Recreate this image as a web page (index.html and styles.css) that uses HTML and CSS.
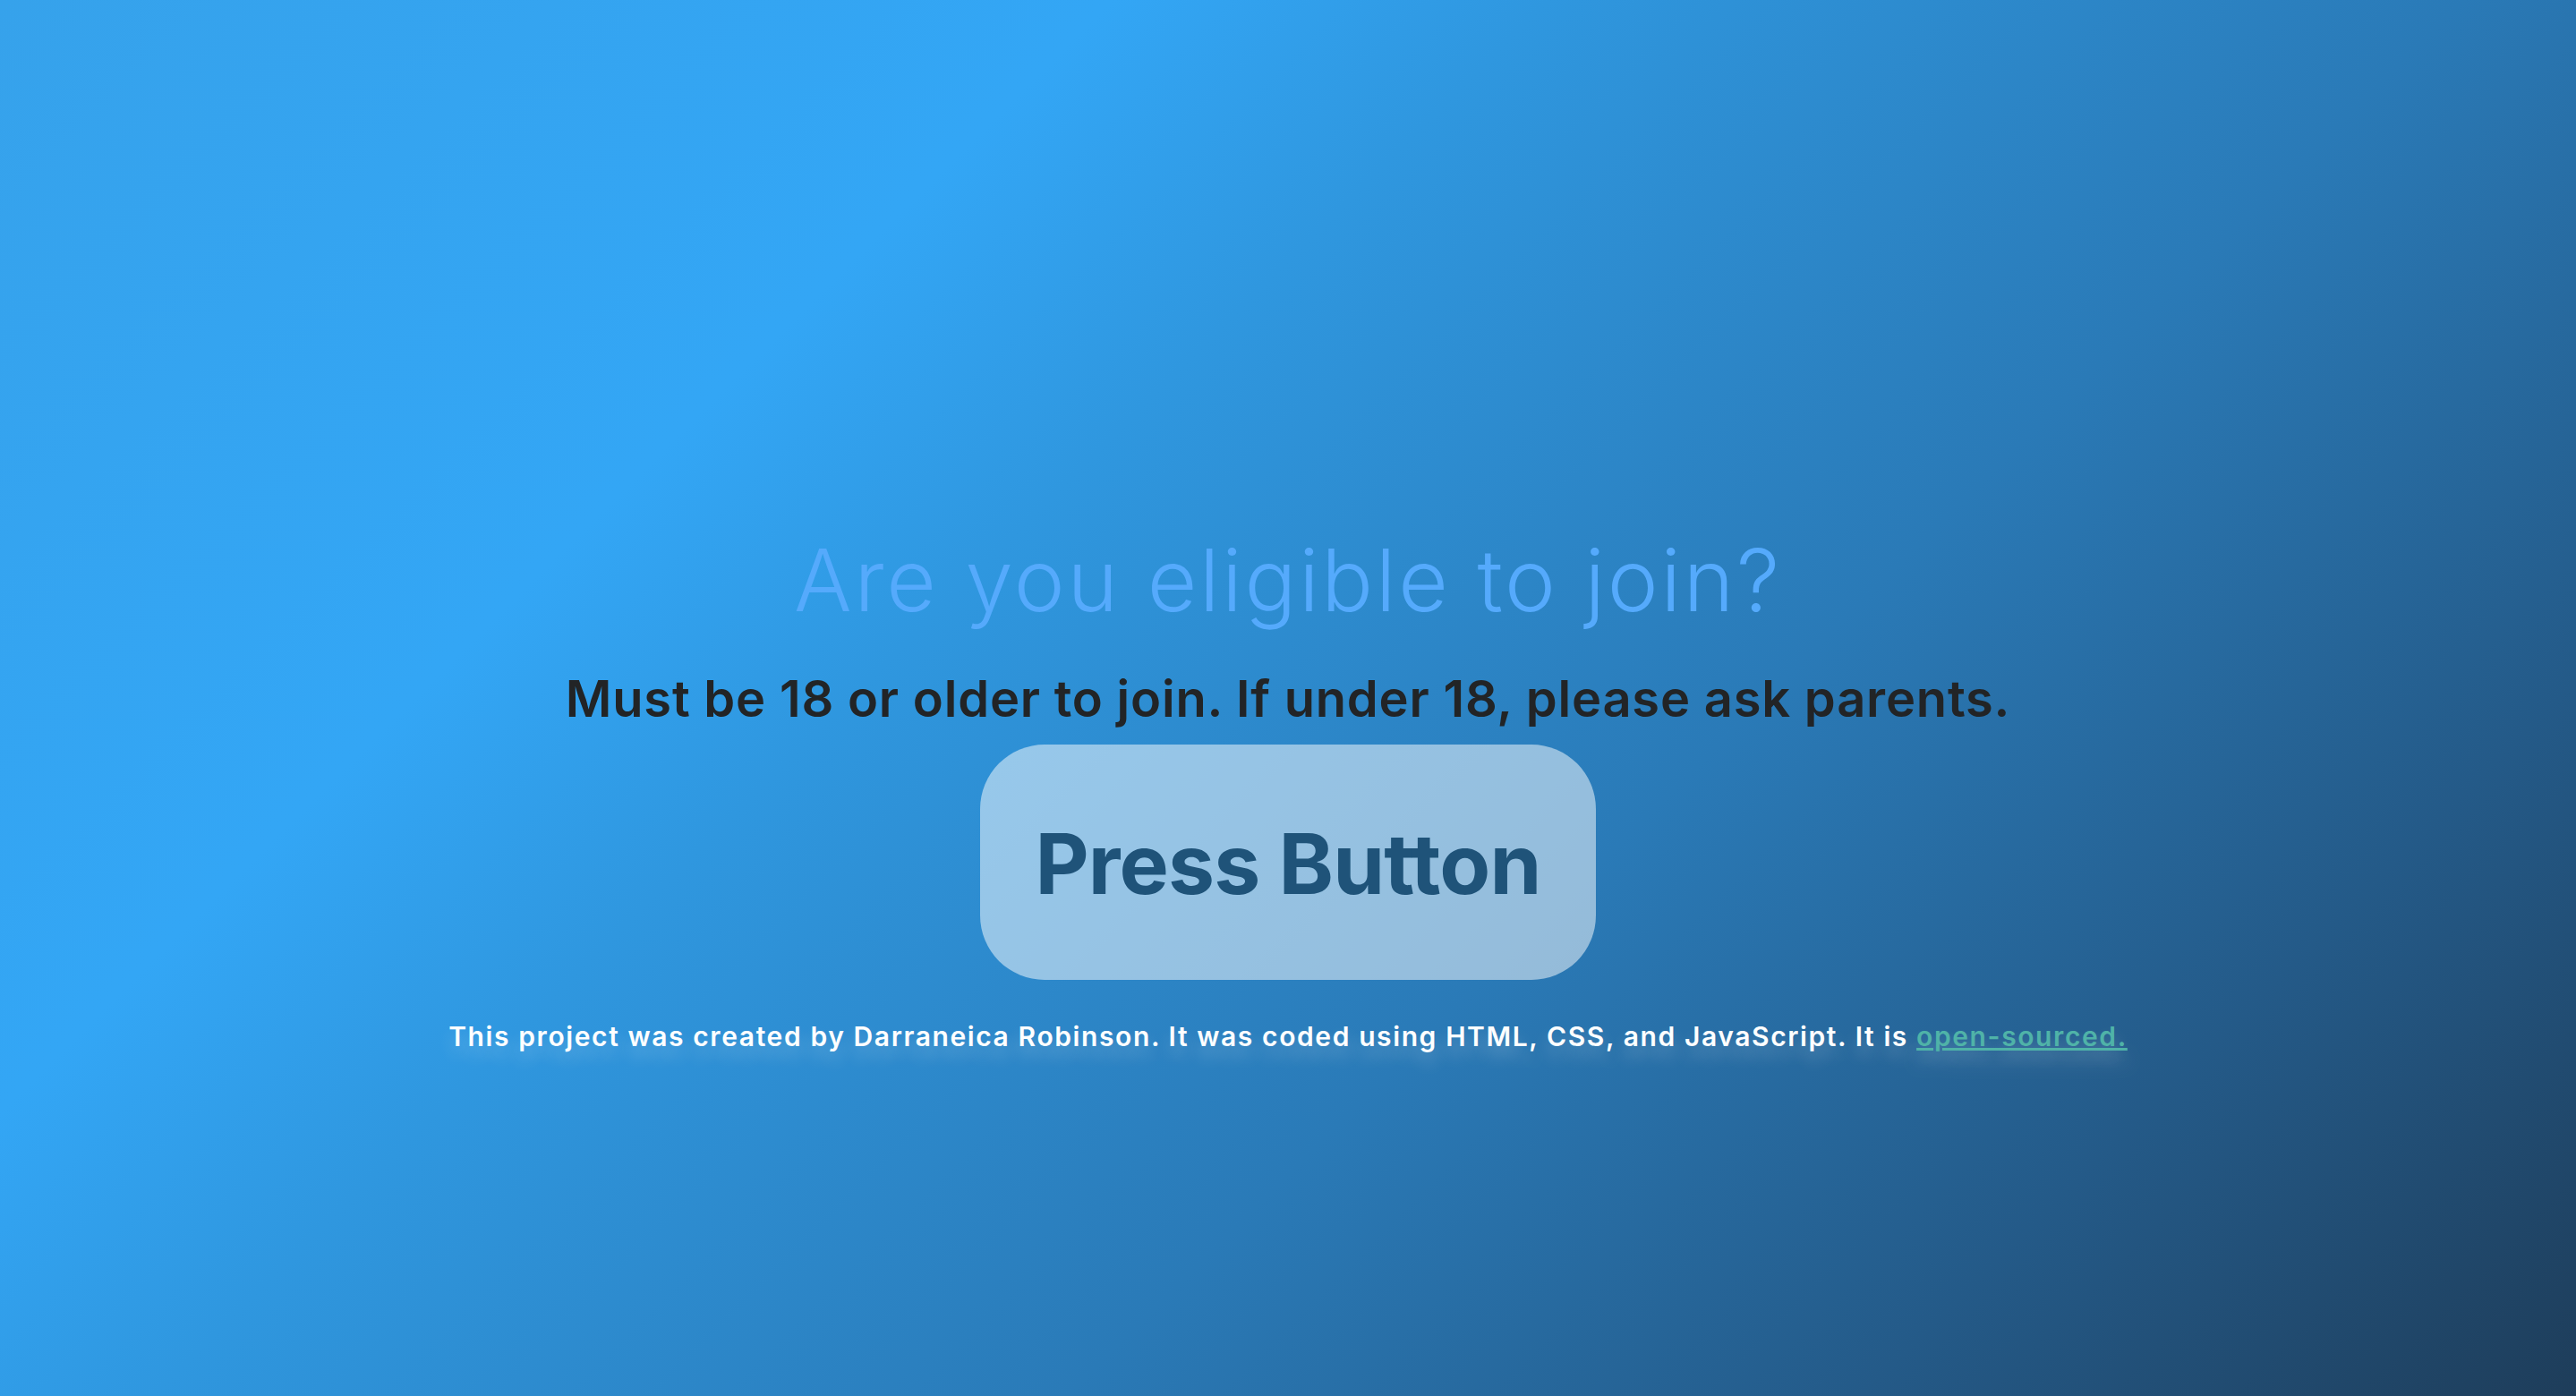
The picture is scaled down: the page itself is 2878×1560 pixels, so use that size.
FILE: index.html
```html
<!DOCTYPE html>
<html lang="en">
<head>
<meta charset="utf-8">
<title>Are you eligible to join?</title>
<link rel="stylesheet" href="styles.css">
</head>
<body>
<main class="page">
  <h1 class="title">Are you eligible to join?</h1>
  <p class="subtitle">Must be 18 or older to join. If under 18, please ask parents.</p>
  <button class="press" type="button">Press Button</button>
  <p class="credit">This project was created by Darraneica Robinson. It was coded using HTML, CSS, and JavaScript. It is <a class="credit-link" href="#">open-sourced.</a></p>
</main>
</body>
</html>
```

FILE: styles.css
```css
html, body {
  margin: 0;
  padding: 0;
  height: 100%;
}

body {
  font-family: "Inter", "Noto Sans", sans-serif;
  background: linear-gradient(135deg, #36a2eb 0%, #33a6f5 28%, #2f97df 39%, #2a7ab7 62%, #245a88 82%, #1e3d5a 100%);
  min-height: 100vh;
}

.page {
  height: 100vh;
  display: flex;
  flex-direction: column;
  align-items: center;
  box-sizing: border-box;
  padding-top: 591px;
}

.title {
  margin: 0;
  font-size: 96px;
  line-height: 115px;
  font-weight: 350;
  letter-spacing: 2.8px;
  color: #55aafc;
}

.subtitle {
  margin: 42px 0 0;
  font-size: 56px;
  line-height: 67px;
  font-weight: 600;
  letter-spacing: 0.8px;
  color: #222426;
}

.press {
  margin-top: 17px;
  font-family: "Inter", "Noto Sans", sans-serif;
  font-size: 93px;
  line-height: 93px;
  font-weight: 700;
  letter-spacing: -0.9px;
  color: #1f5379;
  background: rgba(255, 255, 255, 0.5);
  border: none;
  border-radius: 72px;
  padding: 87px 62px 83px;
  cursor: pointer;
}

.credit {
  margin: 45px 0 0;
  font-size: 30px;
  line-height: 36px;
  font-weight: 600;
  letter-spacing: 1.6px;
  color: #ffffff;
  text-shadow: 0 12px 18px rgba(255, 255, 255, 0.25);
}

.credit-link {
  color: #4fb3a8;
}
```
